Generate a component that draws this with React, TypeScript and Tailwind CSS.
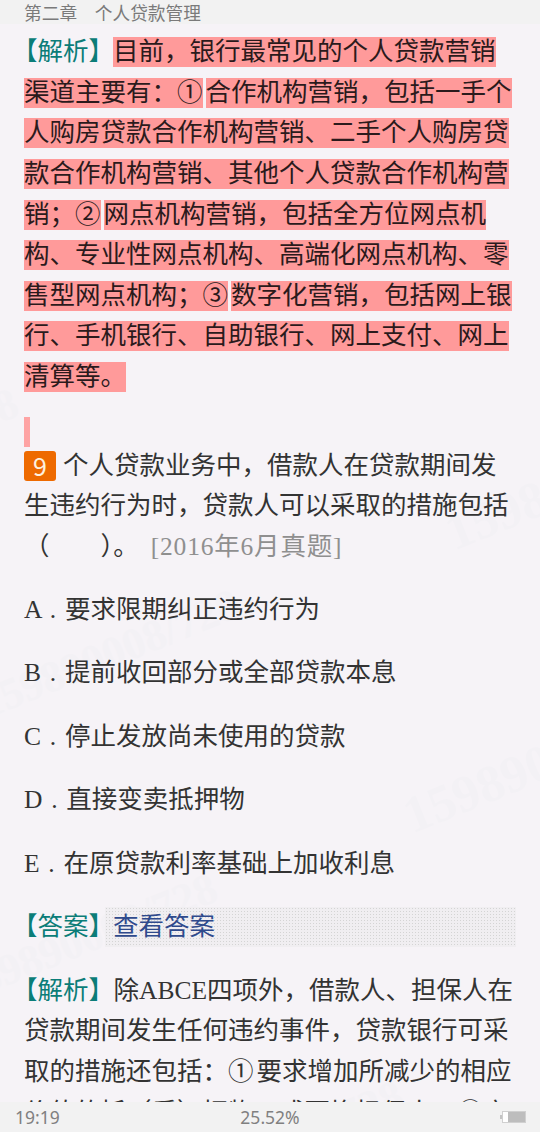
import React from "react";

const hl = "inline-block h-[30px] leading-[30px] bg-[#ff9a9a] text-[#2b1a1c]";
const Tag = ({ t }: { t: string }) => (
  <span className="text-[#0b7d78]">
    <span className="ml-[-12px]">【</span>
    {t}
    <span className="mr-[-12px]">】</span>
  </span>
);

const marks = [
  { x: -19, y: 706, size: "text-[44px]" },
  { x: -240, y: 505, size: "text-[44px]" },
  { x: 448, y: 535, size: "text-[52px]" },
  { x: 406, y: 818, size: "text-[52px]" },
  { x: -41, y: 990, size: "text-[44px]" },
  { x: 145, y: 1197, size: "text-[44px]" },
];

const Line = ({ children, cls = "" }: { children: React.ReactNode; cls?: string }) => (
  <div className={`flex h-[40.6px] items-center whitespace-nowrap ${cls}`}>{children}</div>
);

const Option = ({ k, t }: { k: string; t: string }) => (
  <div className="flex h-[63.5px] items-center whitespace-pre [word-spacing:2.4px]">
    {k} . {t}
  </div>
);

export default function App() {
  return (
    <div className="relative flex h-[1132px] w-[540px] flex-col overflow-hidden bg-[#f6f3f7] font-['Liberation_Serif','Noto_Sans_CJK_SC',serif] text-[25.5px] text-[#333333]">
      {marks.map((m, i) => (
        <div
          key={i}
          className={`pointer-events-none absolute origin-left -rotate-[22deg] whitespace-nowrap font-bold leading-[60px] text-[#f3f1f5] ${m.size}`}
          style={{ left: m.x, top: m.y - 30 }}
        >
          159890008/728
        </div>
      ))}

      <header className="relative z-10 flex h-[24px] shrink-0 items-center bg-[#f2f2f2] pl-[24px] font-['Noto_Sans_CJK_SC',sans-serif] text-[17.7px] text-[#7a7a7a]">
        第二章　个人贷款管理
      </header>

      <main className="relative flex-1 overflow-hidden px-[24px] pt-[8px]">
        <Line>
          <Tag t="解析" />
          <span className={`${hl} ml-[11px]`}>目前，银行最常见的个人贷款营销</span>
        </Line>
        <Line cls="gap-[3px]">
          <span className={hl}>渠道主要有：①</span>
          <span className={hl}>合作机构营销，包括一手个</span>
        </Line>
        <Line>
          <span className={hl}>人购房贷款合作机构营销、二手个人购房贷</span>
        </Line>
        <Line>
          <span className={hl}>款合作机构营销、其他个人贷款合作机构营</span>
        </Line>
        <Line cls="gap-[3px]">
          <span className={hl}>销；②</span>
          <span className={hl}>网点机构营销，包括全方位网点机</span>
        </Line>
        <Line>
          <span className={hl}>构、专业性网点机构、高端化网点机构、零</span>
        </Line>
        <Line cls="gap-[3px]">
          <span className={hl}>售型网点机构；③</span>
          <span className={hl}>数字化营销，包括网上银</span>
        </Line>
        <Line>
          <span className={hl}>行、手机银行、自助银行、网上支付、网上</span>
        </Line>
        <Line>
          <span className={hl}>清算等。</span>
        </Line>

        <div className="mt-[20px] h-[30px] w-[6px] bg-[#ff9a9a]/90" />

        <Line cls="mt-[-2px]">
          <span className="mr-[7px] flex h-[30px] w-[32px] items-center justify-center rounded-[3px] bg-[#ee6a00] font-['Noto_Sans_CJK_SC',sans-serif] text-[25px] text-[#fdf1e0]">
            9
          </span>
          个人贷款业务中，借款人在贷款期间发
        </Line>
        <Line>生违约行为时，贷款人可以采取的措施包括</Line>
        <Line>
          <span>（　　）。</span>
          <span className="ml-[12px] tracking-[0.8px] text-[#8f8f8f]">[2016年6月真题]</span>
        </Line>

        <div className="mt-[11px]">
          <Option k="A" t="要求限期纠正违约行为" />
          <Option k="B" t="提前收回部分或全部贷款本息" />
          <Option k="C" t="停止发放尚未使用的贷款" />
          <Option k="D" t="直接变卖抵押物" />
          <Option k="E" t="在原贷款利率基础上加收利息" />
        </div>

        <div className="mt-[11px] flex h-[41px] items-center whitespace-nowrap">
          <Tag t="答案" />
          <span className="ml-[2.5px] flex h-[40px] flex-1 items-center bg-[radial-gradient(circle,#d4d4d4_1px,#f0eef1_1px)] bg-[length:3px_3px] pl-[8.5px] text-[#2f4a8c]">
            查看答案
          </span>
        </div>

        <Line cls="mt-[23px]">
          <Tag t="解析" />
          <span className="ml-[11.5px]">除ABCE四项外，借款人、担保人在</span>
        </Line>
        <Line>贷款期间发生任何违约事件，贷款银行可采</Line>
        <Line cls="gap-[3px]">
          <span>取的措施还包括：①</span>
          <span>要求增加所减少的相应</span>
        </Line>
        <Line>价值的抵（质）押物，或更换担保人；②宣</Line>
      </main>

      <footer className="relative z-10 grid h-[30px] shrink-0 grid-cols-[1fr_auto_1fr] items-center bg-[#f2f2f2] px-[14px] font-['Noto_Sans',sans-serif] text-[17.5px] text-[#808080]">
        <span className="pl-[1px]">19:19</span>
        <span className="text-center">25.52%</span>
        <span className="flex items-center justify-end">
          <span className="h-[4px] w-[2px] bg-[#c4c4c4]" />
          <span className="flex h-[12px] w-[24px] justify-end border border-[#d0d0d0] bg-white">
            <span className="h-full w-[17px] bg-[#bdbdbd]" />
          </span>
        </span>
      </footer>
    </div>
  );
}
